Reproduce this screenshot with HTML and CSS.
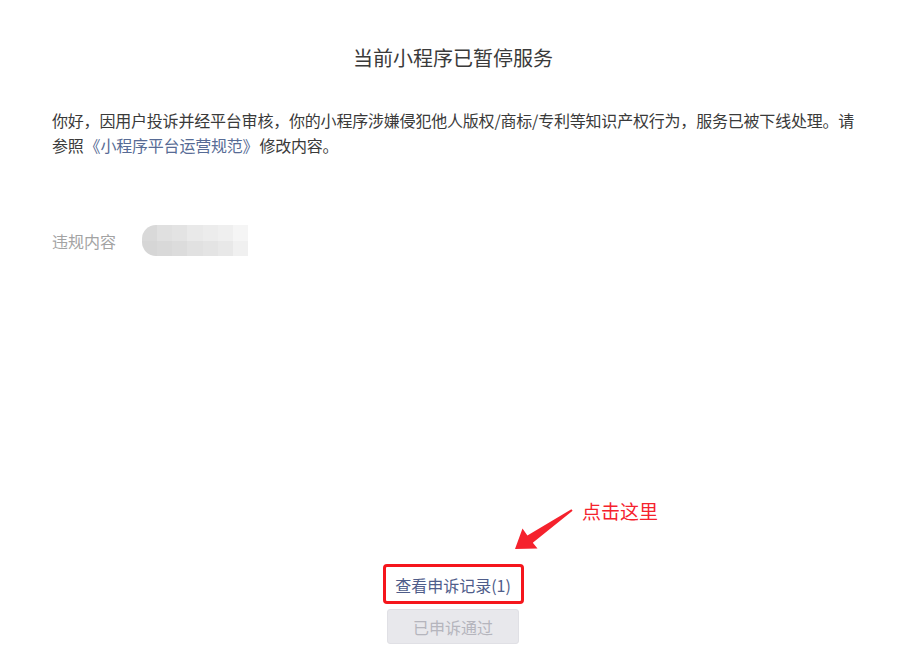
FILE: index.html
```html
<!DOCTYPE html>
<html lang="zh-CN">
<head>
<meta charset="utf-8">
<link rel="stylesheet" href="styles.css">
</head>
<body>
<div class="page">
  <h1 class="title">当前小程序已暂停服务</h1>
  <p class="notice">你好，因用户投诉并经平台审核，你的小程序涉嫌侵犯他人版权/商标/专利等知识产权行为，服务已被下线处理。请<span class="ref">参照<a class="link" href="#">《小程序平台运营规范》</a>修改内容。</span></p>
  <div class="row">
    <span class="label">违规内容</span>
    <span class="blurred">
      <i class="c1"></i><i class="c2"></i><i class="c3"></i><i class="c4"></i><i class="c5"></i><i class="c6"></i><i class="c7"></i>
      <i class="d1"></i><i class="d2"></i><i class="d3"></i><i class="d4"></i><i class="d5"></i><i class="d6"></i><i class="d7"></i>
    </span>
  </div>
  <div class="actions">
    <a class="records highlight" href="#">查看申诉记录(1)</a>
    <button class="done" disabled>已申诉通过</button>
  </div>
  <div class="annotation">
    <svg class="arrow" width="70" height="55" viewBox="0 0 70 55">
      <polygon points="5,49 12.5,28.5 17.4,35.4 61.4,9.2 62.6,10.8 22.8,42.8 27.5,48.5" fill="#f5222d"/>
    </svg>
    <span class="note">点击这里</span>
  </div>
</div>
</body>
</html>
```
FILE: styles.css
```css
* { box-sizing: border-box; }
html, body { margin: 0; padding: 0; background: #fff; }
body {
  font-family: "Noto Sans CJK SC", "Microsoft YaHei", "Liberation Sans", sans-serif;
  color: #3a3a3a;
}
.page {
  position: relative;
  width: 914px;
  height: 655px;
  padding: 44px 60px 11px 52px;
  display: flex;
  flex-direction: column;
}
.title {
  margin: 0;
  font-size: 20px;
  line-height: 28px;
  font-weight: normal;
  text-align: center;
  color: #3a3a3a;
}
.notice {
  margin: 36px -8px 0 0;
  font-size: 16px;
  line-height: 25px;
  letter-spacing: -0.2px;
  color: #3a3a3a;
}
.ref { display: inline-block; }
.link { display: inline-block; color: #576b95; text-decoration: none; padding: 0 1px; }
.row {
  margin-top: 67px;
  display: flex;
  align-items: center;
}
.label {
  font-size: 16px;
  line-height: 20px;
  color: #a3a3a3;
  width: 90px;
}
.blurred {
  width: 106px;
  height: 31px;
  border-radius: 14px 0 0 14px;
  overflow: hidden;
  display: grid;
  grid-template-columns: repeat(7, 1fr);
  grid-template-rows: 1fr 1fr;
  filter: blur(0.6px);
}
.blurred i { display: block; }
.c1 { background: #d9d9d9; } .c2 { background: #e0e0e0; } .c3 { background: #e3e3e3; } .c4 { background: #e9e9e9; }
.c5 { background: #ececec; } .c6 { background: #efefef; } .c7 { background: #f5f5f5; }
.d1 { background: #d6d6d6; } .d2 { background: #d9d9d9; } .d3 { background: #dcdcdc; } .d4 { background: #e1e1e1; }
.d5 { background: #e4e4e4; } .d6 { background: #e8e8e8; } .d7 { background: #f0f0f0; }
.actions {
  margin-top: auto;
  display: flex;
  flex-direction: column;
  align-items: center;
  gap: 5px;
}
.records {
  width: 141px;
  height: 40px;
  display: flex;
  align-items: center;
  justify-content: center;
  font-size: 16px;
  color: #4f5d8a;
  text-decoration: none;
  padding-top: 1px;
}
.highlight {
  border: 3px solid #f5161c;
  border-radius: 4px;
}
.done {
  width: 132px;
  height: 35px;
  border: 1px solid #e0e0e5;
  border-radius: 3px;
  background: #e8e8ec;
  color: #b5b5bd;
  font-family: inherit;
  font-size: 16px;
  padding: 0;
}
.annotation {
  position: absolute;
  left: 510px;
  top: 500px;
  display: flex;
  align-items: flex-start;
}
.arrow { display: block; }
.note {
  margin-left: 2px;
  margin-top: -1px;
  font-size: 19px;
  line-height: 24px;
  color: #f5222d;
}
```
